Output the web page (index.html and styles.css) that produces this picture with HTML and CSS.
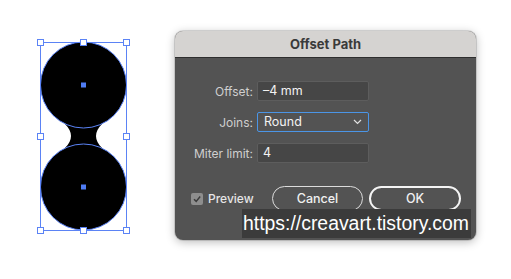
FILE: index.html
```html
<!DOCTYPE html>
<html lang="en">
<head>
    <meta charset="UTF-8">
    <title>Offset Path</title>
    <link rel="stylesheet" href="styles.css">
</head>
<body>
    <!-- Artboard with the selected shape -->
    <svg class="artboard" width="170" height="279" viewBox="0 0 170 279">
        <path d="M65,124 Q77,136 65,148 L102,148 Q90,136 102,124 Z" fill="#000"/>
        <circle cx="83.5" cy="85" r="43" fill="#000" stroke="#5b83f5" stroke-width="1"/>
        <circle cx="83.5" cy="187" r="43" fill="#000" stroke="#5b83f5" stroke-width="1"/>
        <rect x="81" y="82.5" width="5" height="5" fill="#4f7cf3"/>
        <rect x="81" y="184.5" width="5" height="5" fill="#4f7cf3"/>
        <rect x="40.5" y="42.5" width="86" height="188" fill="none" stroke="#5b83f5" stroke-width="1"/>
        <g fill="#fff" stroke="#5b83f5" stroke-width="1">
            <rect x="37.5" y="39.5" width="6" height="6"/>
            <rect x="80.5" y="39.5" width="6" height="6"/>
            <rect x="123.5" y="39.5" width="6" height="6"/>
            <rect x="37.5" y="133.5" width="6" height="6"/>
            <rect x="123.5" y="133.5" width="6" height="6"/>
            <rect x="37.5" y="227.5" width="6" height="6"/>
            <rect x="80.5" y="227.5" width="6" height="6"/>
            <rect x="123.5" y="227.5" width="6" height="6"/>
        </g>
    </svg>

    <!-- Dialog -->
    <div class="dialog">
        <div class="title-bar">Offset Path</div>
        <div class="dialog-body">
            <div class="fields">
                <label class="field-label">Offset:</label>
                <div class="field-box">&ndash;4 mm</div>
                <label class="field-label">Joins:</label>
                <div class="field-box select">
                    <span>Round</span>
                    <svg width="9" height="6" viewBox="0 0 9 6"><path d="M1,1 L4.5,4.5 L8,1" fill="none" stroke="#e0e0e0" stroke-width="1.2"/></svg>
                </div>
                <label class="field-label">Miter limit:</label>
                <div class="field-box">4</div>
            </div>
            <div class="actions">
                <div class="preview">
                    <span class="checkbox">
                        <svg width="12" height="12" viewBox="0 0 12 12"><path d="M3,6.2 L5.2,8.4 L9.2,3.6" fill="none" stroke="#3c3c3c" stroke-width="1.5"/></svg>
                    </span>
                    <span>Preview</span>
                </div>
                <button class="btn">Cancel</button>
                <button class="btn btn-default">OK</button>
            </div>
        </div>
        <div class="watermark">https://creavart.tistory.com</div>
    </div>
</body>
</html>
```

FILE: styles.css
```css
* {
    margin: 0;
    padding: 0;
    box-sizing: border-box;
}

body {
    display: flex;
    align-items: flex-start;
    background: #fff;
    font-family: 'Inter', 'Liberation Sans', sans-serif;
    width: 511px;
    height: 279px;
    overflow: hidden;
}

.artboard {
    display: block;
    flex: none;
}

.dialog {
    position: relative;
    margin-top: 31px;
    margin-left: 5px;
    width: 301px;
    height: 209px;
    border-radius: 8px;
    background: #535353;
    overflow: hidden;
    box-shadow: 0 2px 10px rgba(0, 0, 0, 0.28), 0 0 0 1px rgba(0, 0, 0, 0.12);
}

.title-bar {
    height: 27px;
    background: #d5d3d1;
    border-bottom: 1px solid #2e2e2e;
    text-align: center;
    font-size: 13px;
    font-weight: 700;
    line-height: 27px;
    color: #3a3a3a;
}

.dialog-body {
    padding: 23px 0 0 0;
}

.fields {
    display: grid;
    grid-template-columns: 78px 112px;
    column-gap: 4px;
    row-gap: 11px;
    align-items: center;
}

.field-label {
    text-align: right;
    font-size: 12px;
    color: #cfcfcf;
}

.field-box {
    height: 20px;
    padding-left: 5px;
    background: #464646;
    border: 1px solid #5d5d5d;
    border-radius: 2px;
    font-size: 12.5px;
    line-height: 18px;
    color: #f2f2f2;
}

.field-box.select {
    display: flex;
    align-items: center;
    justify-content: space-between;
    padding: 0 6px 0 6px;
    background: #535353;
    border: 1px solid #4b95e6;
}

.actions {
    display: flex;
    align-items: center;
    margin-top: 23px;
    padding-left: 16px;
}

.preview {
    display: flex;
    align-items: center;
    gap: 5px;
    width: 81px;
    font-size: 12px;
    font-weight: 500;
    color: #e6e6e6;
}

.checkbox {
    display: flex;
    width: 12px;
    height: 12px;
    border-radius: 2px;
    background: #8e8e8e;
}

.btn {
    width: 91px;
    height: 25px;
    margin-right: 6px;
    border: 1px solid #dcdcdc;
    border-radius: 13px;
    background: #535353;
    color: #f0f0f0;
    font-family: 'Inter', 'Liberation Sans', sans-serif;
    font-size: 12.5px;
    font-weight: 500;
}

.btn-default {
    width: 92px;
    border: 2px solid #f4f4f4;
}

/* Watermark text laid over the dialog */
.watermark {
    position: absolute;
    left: 67px;
    top: 178px;
    width: 229px;
    height: 29px;
    padding-left: 1px;
    background: #3b3b3b;
    color: #fff;
    font-family: 'Liberation Sans', sans-serif;
    font-size: 19.4px;
    line-height: 29px;
    white-space: nowrap;
    overflow: hidden;
}
```
